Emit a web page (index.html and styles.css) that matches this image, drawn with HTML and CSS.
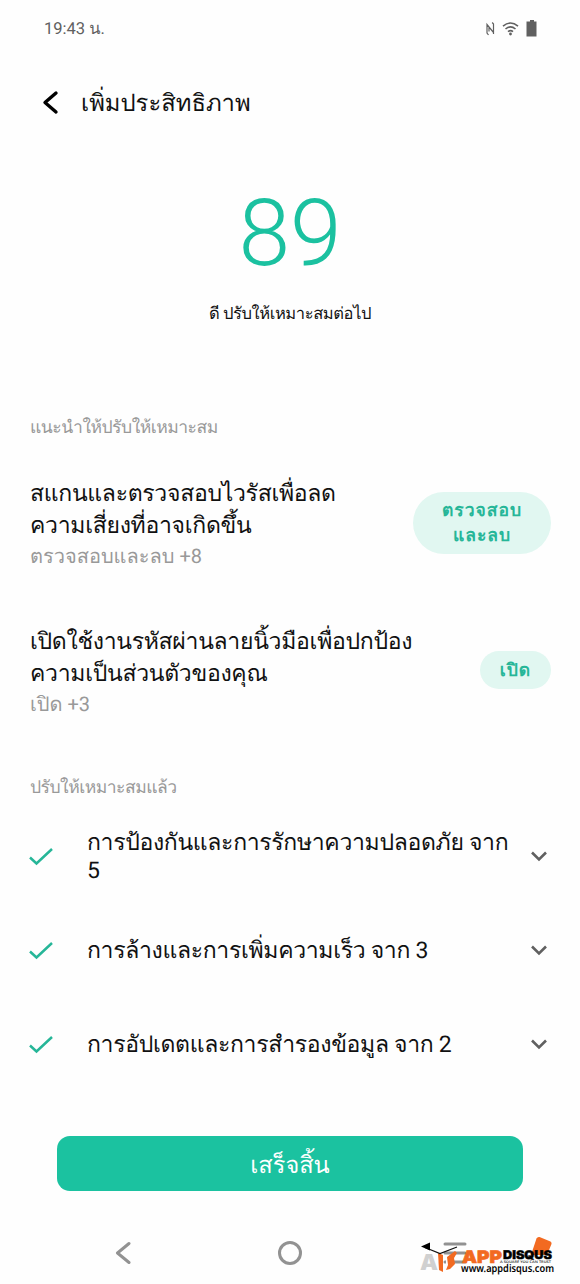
FILE: index.html
```html
<!DOCTYPE html>
<html lang="th">
<head>
<meta charset="utf-8">
<title>เพิ่มประสิทธิภาพ</title>
<link rel="stylesheet" href="styles.css">
</head>
<body>
<div class="screen">
  <header class="status">
    <span class="clock">19:43 น.</span>
    <svg class="status-icons" width="56" height="22" viewBox="0 0 56 22" fill="none" stroke="#606060">
      <path d="M4.500 17L3 15V6.500L9.500 14.500V6L8.200 4.500M5 9V13.500M9.500 14.500V16" stroke-width="1.200"/>
      <path d="M19 8.200Q26.500 1.800 34 8.200M21.500 11Q26.500 6.600 31.500 11M24 13.700Q26.500 11.500 29 13.700" stroke-width="1.600"/>
      <circle cx="26.500" cy="16" r="1.400" fill="#606060" stroke="none"/>
      <path d="M46 2h4v1.500h2.500v15h-10V3.500h3.500z" fill="#606060" stroke="none"/>
    </svg>
  </header>
  <div class="titlebar">
    <svg width="18" height="26" viewBox="0 0 18 26" fill="none" stroke="#000" stroke-width="3.400" stroke-linecap="round" stroke-linejoin="round"><path d="M15 3L4 12.500L15 22"/></svg>
    <h1>เพิ่มประสิทธิภาพ</h1>
  </div>
  <section class="score">
    <div class="number">89</div>
    <p>ดี ปรับให้เหมาะสมต่อไป</p>
  </section>
  <h2 class="label first">แนะนำให้ปรับให้เหมาะสม</h2>
  <section class="tip tip-scan">
    <div class="tip-text">
      <p>สแกนและตรวจสอบไวรัสเพื่อลด<br>ความเสี่ยงที่อาจเกิดขึ้น</p>
      <small>ตรวจสอบและลบ +8</small>
    </div>
    <button class="pill big">ตรวจสอบ<br>และลบ</button>
  </section>
  <section class="tip tip-lock">
    <div class="tip-text">
      <p>เปิดใช้งานรหัสผ่านลายนิ้วมือเพื่อปกป้อง<br>ความเป็นส่วนตัวของคุณ</p>
      <small>เปิด +3</small>
    </div>
    <button class="pill">เปิด</button>
  </section>
  <h2 class="label second">ปรับให้เหมาะสมแล้ว</h2>
  <ul class="done">
    <li>
      <svg class="check" viewBox="0 0 24 20"><path d="M1 10.500L7.500 16.500L23 2"/></svg>
      <span>การป้องกันและการรักษาความปลอดภัย จาก<br>5</span>
      <svg class="chev" viewBox="0 0 18 12"><path d="M2 1.500L9 8.500L16 1.500"/></svg>
    </li>
    <li>
      <svg class="check" viewBox="0 0 24 20"><path d="M1 10.500L7.500 16.500L23 2"/></svg>
      <span>การล้างและการเพิ่มความเร็ว จาก 3</span>
      <svg class="chev" viewBox="0 0 18 12"><path d="M2 1.500L9 8.500L16 1.500"/></svg>
    </li>
    <li>
      <svg class="check" viewBox="0 0 24 20"><path d="M1 10.500L7.500 16.500L23 2"/></svg>
      <span>การอัปเดตและการสำรองข้อมูล จาก 2</span>
      <svg class="chev" viewBox="0 0 18 12"><path d="M2 1.500L9 8.500L16 1.500"/></svg>
    </li>
  </ul>
  <button class="finish">เสร็จสิ้น</button>
  <nav class="nav">
    <svg width="16" height="24" viewBox="0 0 16 24"><path d="M14 2.500L2.500 12L14 21.500"/></svg>
    <svg width="26" height="26" viewBox="0 0 26 26"><circle cx="13" cy="13" r="10.500"/></svg>
    <svg width="26" height="24" viewBox="0 0 26 24"><path d="M3 3H23M3 12H23M3 21H23"/></svg>
  </nav>
  <svg class="brand" width="144" height="48" viewBox="416 1232 144 48">
    <text x="420" y="1270" class="mark" fill="#d0d0d0" font-size="22" textLength="18" lengthAdjust="spacingAndGlyphs">A</text>
    <path d="M438 1253l5 2v17l-4-2z" fill="#f26a21"/>
    <path d="M446 1256l4 3v11l-4 2z" fill="#fff"/>
    <path d="M447 1257l8-6 2 2-3 5 1 6-5 5-4 1 2-5z" fill="#f26a21"/>
    <path d="M425 1247.500L440 1253.500L457 1247" fill="none" stroke="#111" stroke-width="1.200"/>
    <path d="M421 1246.500l9-4v8z" fill="#000"/>
    <path d="M539.500 1237l11 4.500q1.500 1 1 2.500l-4.500 11h-16l5.500-16.500q1-2 3-1.500z" fill="#f26a21"/>
    <text x="462" y="1262.500" class="mark" fill="#f26a21" stroke="#f26a21" stroke-width=".6" font-size="17" textLength="40" lengthAdjust="spacingAndGlyphs">APP</text>
    <text x="503" y="1258.500" class="mark" fill="#000" stroke="#000" stroke-width=".4" font-size="12" textLength="49" lengthAdjust="spacingAndGlyphs">DISQUS</text>
    <text x="500" y="1263" class="url" fill="#333" font-size="3.500" textLength="51" lengthAdjust="spacingAndGlyphs">A SQUARE YOU CAN TRUST</text>
    <text x="461" y="1271.500" class="url" fill="#000" font-size="10.500" textLength="93" lengthAdjust="spacingAndGlyphs">www.appdisqus.com</text>
  </svg>
</div>
</body>
</html>
```

FILE: styles.css
```css
* { box-sizing: border-box; margin: 0; padding: 0; }
body { background: #fefefe; color: #111; font-family: Roboto, "Noto Sans", sans-serif; text-rendering: geometricPrecision; }
.screen { width: 580px; height: 1284px; position: relative; overflow: hidden; display: flex; flex-direction: column; }
button { border: 0; font-family: inherit; text-rendering: inherit; }
.status { height: 58px; padding: 0 40px 0 44px; display: flex; align-items: center; justify-content: space-between; color: #606060; font-size: 16.500px; }
.clock { line-height: 20px; padding-top: 2px; }
.status-icons { display: block; }
.titlebar { height: 90px; padding-left: 41px; display: flex; align-items: center; gap: 22px; }
h1 { font-size: 23.800px; font-weight: 400; line-height: 34px; }
.score { height: 253px; padding-top: 32px; text-align: center; }
.number { height: 108px; line-height: 108px; font-size: 93px; font-weight: 300; color: #1bc1a0; }
.score p { margin-top: 15px; font-size: 16.500px; line-height: 24px; color: #111; letter-spacing: -.4px; }
.label { padding-left: 30px; font-size: 17.500px; line-height: 26px; font-weight: 400; color: #999; letter-spacing: -.5px; }
.first { margin-top: 14px; height: 63px; }
.tip { padding: 0 30px; display: flex; justify-content: space-between; }
.tip p { font-size: 23px; line-height: 32px; white-space: nowrap; letter-spacing: -.3px; }
.tip small { display: block; font-size: 20px; line-height: 29px; color: #999; }
.tip-scan { height: 148px; }
.tip-lock { height: 148px; }
.pill { background: #e1f7f1; color: #26b698; font-weight: 700; font-size: 17.500px; letter-spacing: 1px; line-height: 25px; width: 71px; height: 38px; border-radius: 31px; margin: 25px -1px 0 0; padding-top: 2px; }
.pill.big { width: 138px; height: 62px; margin-top: 14px; }
.second { height: 36px; padding-top: 1px; }
.done { list-style: none; height: 326px; }
.done li { display: flex; align-items: center; padding: 0 32px 0 29px; height: 94px; }
.done span { flex: 1; margin-left: 34px; font-size: 23px; line-height: 28px; white-space: nowrap; letter-spacing: -.33px; }
.check { width: 24px; height: 20px; fill: none; stroke: #26b698; stroke-width: 2.500; }
.chev { width: 18px; height: 12px; fill: none; stroke: #606060; stroke-width: 2.600; }
.finish { margin: 0 57px; height: 55px; border-radius: 13px; background: #1bc2a0; color: #fff; font-size: 23.600px; padding-top: 3px; }
.nav { margin-top: 49px; padding: 0 112px 0 115px; height: 26px; display: grid; grid-template-columns: 162px 1fr 26px; align-items: center; fill: none; stroke: #929292; stroke-width: 3; stroke-linecap: round; stroke-linejoin: round; }
.brand { position: absolute; left: 416px; top: 1232px; }
.mark { font-family: Inter, sans-serif; font-weight: 900; }
.url { font-family: "Noto Sans", sans-serif; font-weight: 600; }
```
